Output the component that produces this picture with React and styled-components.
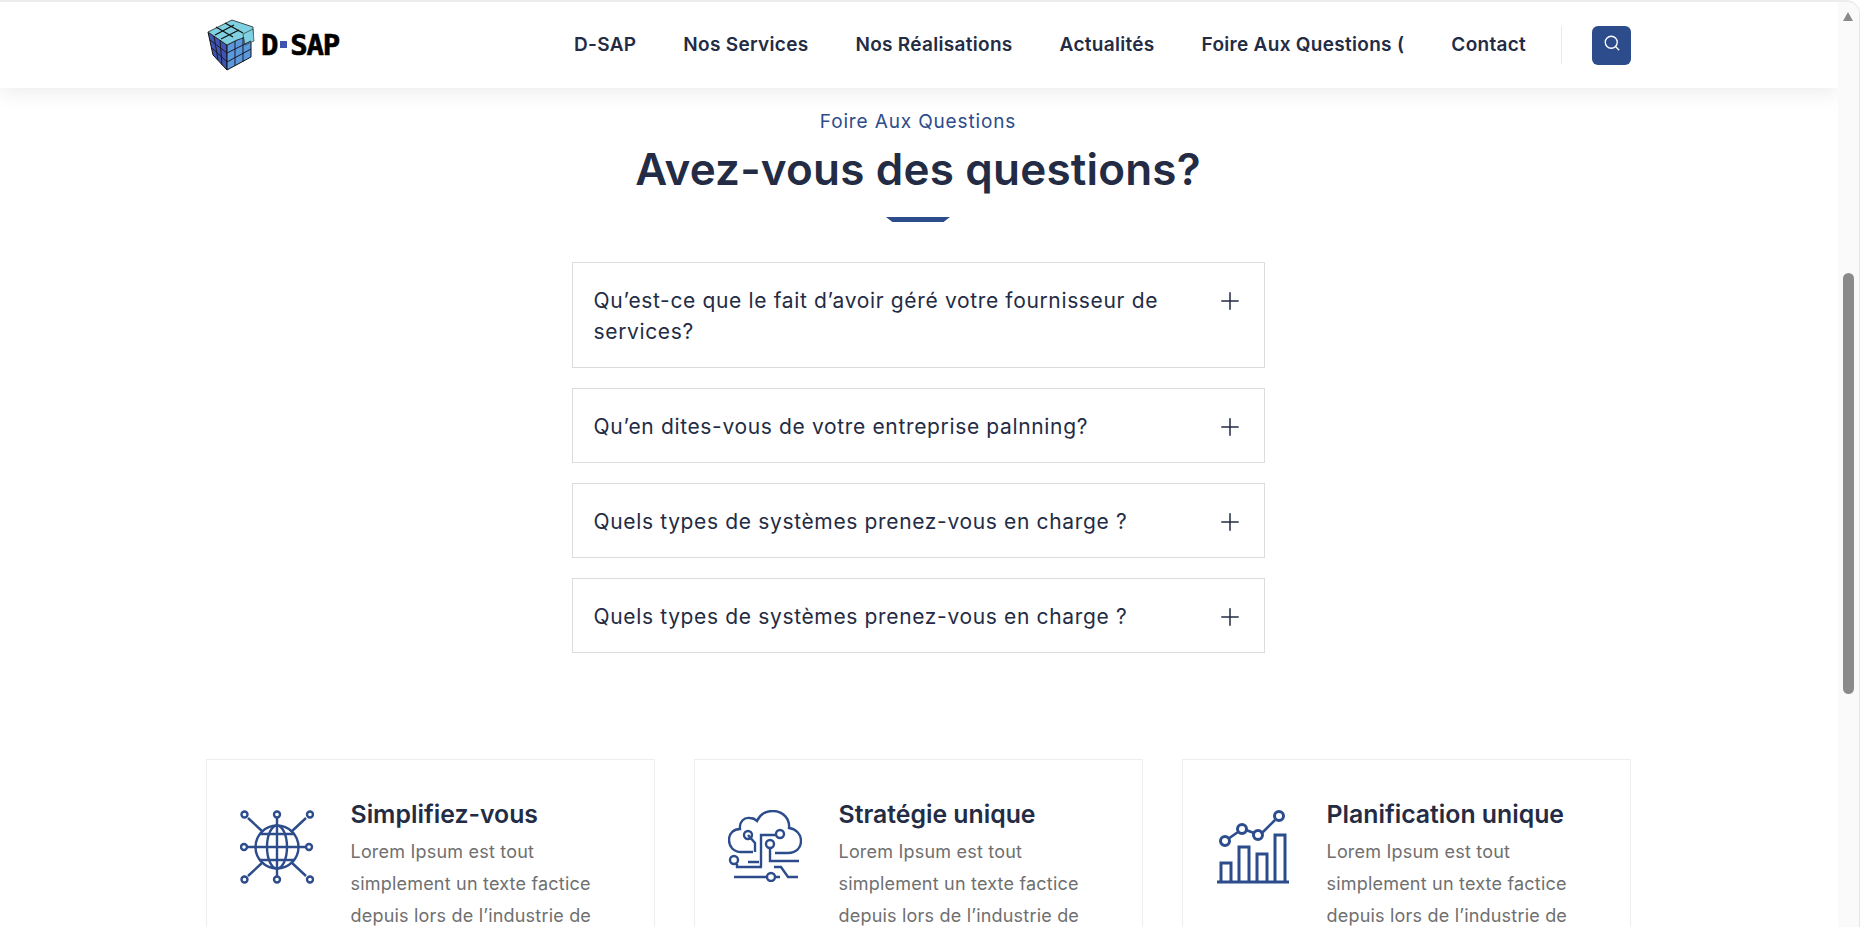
import React from "react";
import styled, { createGlobalStyle } from "styled-components";
import { Search, Plus } from "lucide-react";

const BLUE = "#2c4c8c";
const DARK = "#232c44";
const FONT = `Inter, "Liberation Sans", sans-serif`;

const faqs = [
  "Qu’est-ce que le fait d’avoir géré votre fournisseur de services?",
  "Qu’en dites-vous de votre entreprise palnning?",
  "Quels types de systèmes prenez-vous en charge ?",
  "Quels types de systèmes prenez-vous en charge ?",
];

const navItems = ["D-SAP", "Nos Services", "Nos Réalisations", "Actualités", "Foire Aux Questions (", "Contact"];

function CubeLogo() {
  return (
    <svg width="48" height="54" viewBox="0 0 48 54">
      <path d="M1 14 L20 27 L20 52 L6 37 Z" fill="#3f54b0" stroke="#111" strokeWidth="1" />
      <path d="M20 27 L44 15 L44 39 L20 52 Z" fill="#5b98dc" stroke="#111" strokeWidth="1" />
      <path d="M1 14 L13 8 L25 2 L46 9 L46 17 L30 22 L20 27 Z" fill="#7fd0e0" stroke="#222" strokeWidth="0.8" />
      <path d="M36 16 L46 11 L47 23 L38 27 Z" fill="#7fd0e0" stroke="#222" strokeWidth="0.6" />
      <path d="M7 18 L11 42 M13 22 L15 47 M3 22 L20 35 M5 30 L20 44 M28 23 L28 48 M36 19 L36 44 M20 35 L44 23 M20 44 L44 31" stroke="#1a1a2a" strokeWidth="1" fill="none" />
      <path d="M8 17 L27 7 M14 21 L32 12 M9 9 L26 19 M18 5 L36 15" stroke="#111" strokeWidth="1.2" fill="none" />
    </svg>
  );
}

function GlobeIcon() {
  return (
    <svg width="74" height="74" viewBox="0 0 74 74" fill="none" stroke={BLUE} strokeWidth="2.4">
      <circle cx="37" cy="37" r="21.5" />
      <ellipse cx="37" cy="37" rx="10" ry="21.5" />
      <path d="M37 7 V67 M7 37 H67 M19 24 H55 M19 50 H55" />
      <path d="M8 8 L23 22 M66 8 L51 22 M8 66 L23 52 M66 66 L51 52" />
      <circle cx="4.5" cy="4.5" r="3" />
      <circle cx="37" cy="4.5" r="3" />
      <circle cx="70" cy="4.5" r="3" />
      <circle cx="4" cy="37" r="3" />
      <circle cx="69" cy="37" r="3" />
      <circle cx="4.5" cy="69.5" r="3" />
      <circle cx="37" cy="69.5" r="3" />
      <circle cx="70" cy="69.5" r="3" />
    </svg>
  );
}

function CloudIcon() {
  return (
    <svg width="74" height="72" viewBox="0 0 74 72" fill="none" stroke={BLUE} strokeWidth="2.4">
      <path d="M25 42 H13 C5 42 1 36 1 30 C1 23 6 19 12 19 C11 12 16 7 22 8 C25 8 27 9 29 11 C32 4 38 1 45 1 C55 1 62 9 61 18 C68 19 73 24 73 31 C73 38 68 43 60 43 H47" />
      <path d="M20 25 L27 33 V42 M31 52 H20 M33 57 V25 H49" />
      <circle cx="20" cy="25" r="4" />
      <circle cx="52" cy="24" r="4" />
      <circle cx="42" cy="34" r="4" />
      <path d="M42 38 V51 H71 M34 57 H9 V54" />
      <circle cx="6" cy="50" r="4" />
      <path d="M6 67 H40 M47 67 H52 M46 57 H53 L60 67 H70" />
      <circle cx="43" cy="67" r="4" />
    </svg>
  );
}

function ChartIcon() {
  return (
    <svg width="74" height="74" viewBox="0 0 74 74" fill="none" stroke={BLUE} strokeWidth="3">
      <path d="M1 72 H73" />
      <path d="M5 72 V53 H15 V72 M23 72 V37 H33 V72 M41 72 V44 H51 V72 M59 72 V25 H69 V72" />
      <path d="M12 29 L22 22 M30 20 L38 23 M45 24 L59 10" strokeWidth="2.6" />
      <circle cx="9" cy="31" r="4.5" />
      <circle cx="26" cy="19" r="4.5" />
      <circle cx="42" cy="25" r="4.5" />
      <circle cx="63" cy="6" r="4.5" />
    </svg>
  );
}

const features = [
  { title: "Simplifiez-vous", Icon: GlobeIcon },
  { title: "Stratégie unique", Icon: CloudIcon },
  { title: "Planification unique", Icon: ChartIcon },
];

export default function App() {
  return (
    <Window>
      <GlobalStyle />
      <Page>
        <Header>
          <HeaderInner>
            <Logo>
              <CubeLogo />
              <LogoText>
                D<LogoDot />SAP
              </LogoText>
            </Logo>
            <Nav>
              {navItems.map((item) => (
                <NavLink key={item}>{item}</NavLink>
              ))}
            </Nav>
            <Divider />
            <SearchButton>
              <Search size={18} strokeWidth={1.8} />
            </SearchButton>
          </HeaderInner>
        </Header>

        <Main>
          <Eyebrow>Foire Aux Questions</Eyebrow>
          <Title>Avez-vous des questions?</Title>
          <TitleBar />
          <FaqList>
            {faqs.map((q, i) => (
              <FaqItem key={i}>
                <FaqText>{q}</FaqText>
                <PlusWrap>
                  <Plus size={28} strokeWidth={1.3} />
                </PlusWrap>
              </FaqItem>
            ))}
          </FaqList>
          <Cards>
            {features.map(({ title, Icon }) => (
              <Card key={title}>
                <IconBox>
                  <Icon />
                </IconBox>
                <CardBody>
                  <CardTitle>{title}</CardTitle>
                  <CardText>Lorem Ipsum est tout simplement un texte factice depuis lors de l’industrie de</CardText>
                </CardBody>
              </Card>
            ))}
          </Cards>
        </Main>
      </Page>
      <ScrollTrack>
        <ScrollArrow />
        <ScrollThumb />
      </ScrollTrack>
    </Window>
  );
}

//styled components
const GlobalStyle = createGlobalStyle`
  html, body {
    margin: 0;
    height: 927px;
    overflow: hidden;
    background: #fff;
    font-family: ${FONT};
  }
  * { box-sizing: border-box; }
`;

const Window = styled.div`
  display: flex;
  width: 1860px;
  height: 927px;
  overflow: hidden;
  border-top: 2px solid #ececec;
  border-right: 1px solid #e6e6e6;
  border-top-right-radius: 14px;
  background: #fff;
`;

const Page = styled.div`
  flex: 1;
  min-width: 0;
`;

const Header = styled.header`
  position: relative;
  height: 86px;
  background: #fff;
  box-shadow: 0 6px 18px rgba(0, 0, 0, 0.07);
`;

const HeaderInner = styled.div`
  display: flex;
  align-items: center;
  height: 100%;
  padding: 0 0 0 207px;
  width: 1631px;
`;

const Logo = styled.div`
  display: flex;
  align-items: center;
  gap: 6px;
  width: 367px;
  margin-top: -1px;
`;

const LogoText = styled.div`
  display: flex;
  align-items: center;
  font-family: "DejaVu Sans Mono", monospace;
  font-weight: 700;
  font-size: 29px;
  letter-spacing: -1.2px;
  color: #000;
  -webkit-text-stroke: 0.6px #000;
`;

const LogoDot = styled.span`
  width: 7px;
  height: 7px;
  margin: 0 3px;
  background: #3f54b0;
`;

const Nav = styled.nav`
  display: flex;
  gap: 47px;
  flex: 1;
  margin-top: -2px;
`;

const NavLink = styled.a`
  font-size: 19px;
  font-weight: 600;
  letter-spacing: 0.3px;
  color: ${DARK};
  white-space: nowrap;
`;

const Divider = styled.div`
  width: 1px;
  height: 38px;
  margin-right: 30px;
  background: #e8e8e8;
`;

const SearchButton = styled.button`
  display: flex;
  align-items: center;
  justify-content: center;
  width: 39px;
  height: 39px;
  padding: 0 0 4px;
  border: 0;
  border-radius: 6px;
  background: ${BLUE};
  color: #fff;
`;

const Main = styled.main`
  display: flex;
  flex-direction: column;
  align-items: center;
  padding: 22px 2px 0 0;
`;

const Eyebrow = styled.div`
  font-size: 19px;
  line-height: 24px;
  letter-spacing: 0.85px;
  color: ${BLUE};
`;

const Title = styled.h2`
  margin: 7px 0 0;
  font-size: 44px;
  line-height: 56px;
  font-weight: 600;
  letter-spacing: 0.2px;
  color: ${DARK};
`;

const TitleBar = styled.div`
  width: 64px;
  height: 5px;
  margin-top: 20px;
  background: ${BLUE};
  clip-path: polygon(0 0, 100% 0, 90% 100%, 10% 100%);
`;

const FaqList = styled.div`
  display: flex;
  flex-direction: column;
  gap: 20px;
  width: 693px;
  margin-top: 40px;
`;

const FaqItem = styled.div`
  display: flex;
  justify-content: space-between;
  align-items: flex-start;
  padding: 22px 20px 20px 21px;
  border: 1px solid #dcdcdc;
  background: #fff;
`;

const FaqText = styled.div`
  width: 590px;
  font-size: 21px;
  line-height: 31px;
  letter-spacing: 0.65px;
  color: ${DARK};
`;

const PlusWrap = styled.div`
  display: flex;
  padding-top: 2px;
  color: ${DARK};
`;

const Cards = styled.div`
  display: grid;
  grid-template-columns: repeat(3, 449px);
  gap: 39px;
  margin-top: 106px;
`;

const Card = styled.div`
  display: flex;
  gap: 37px;
  height: 300px;
  padding: 38px 33px;
  border: 1px solid #eeeeee;
`;

const IconBox = styled.div`
  flex: none;
  width: 74px;
  padding-top: 12px;
`;

const CardBody = styled.div`
  width: 262px;
`;

const CardTitle = styled.h3`
  margin: 0;
  font-size: 24.8px;
  line-height: 32px;
  font-weight: 600;
  color: ${DARK};
  white-space: nowrap;
`;

const CardText = styled.p`
  margin: 6px 0 0;
  font-size: 18px;
  line-height: 32px;
  letter-spacing: 0.2px;
  color: #6f6f6f;
`;

const ScrollTrack = styled.div`
  position: relative;
  flex: none;
  width: 21px;
  background: #fafafa;
`;

const ScrollArrow = styled.div`
  position: absolute;
  top: 10px;
  left: 5px;
  border-left: 5.5px solid transparent;
  border-right: 5.5px solid transparent;
  border-bottom: 9px solid #8a8a8a;
`;

const ScrollThumb = styled.div`
  position: absolute;
  top: 271px;
  left: 5px;
  width: 11px;
  height: 421px;
  border-radius: 6px;
  background: #8a8a8a;
`;
